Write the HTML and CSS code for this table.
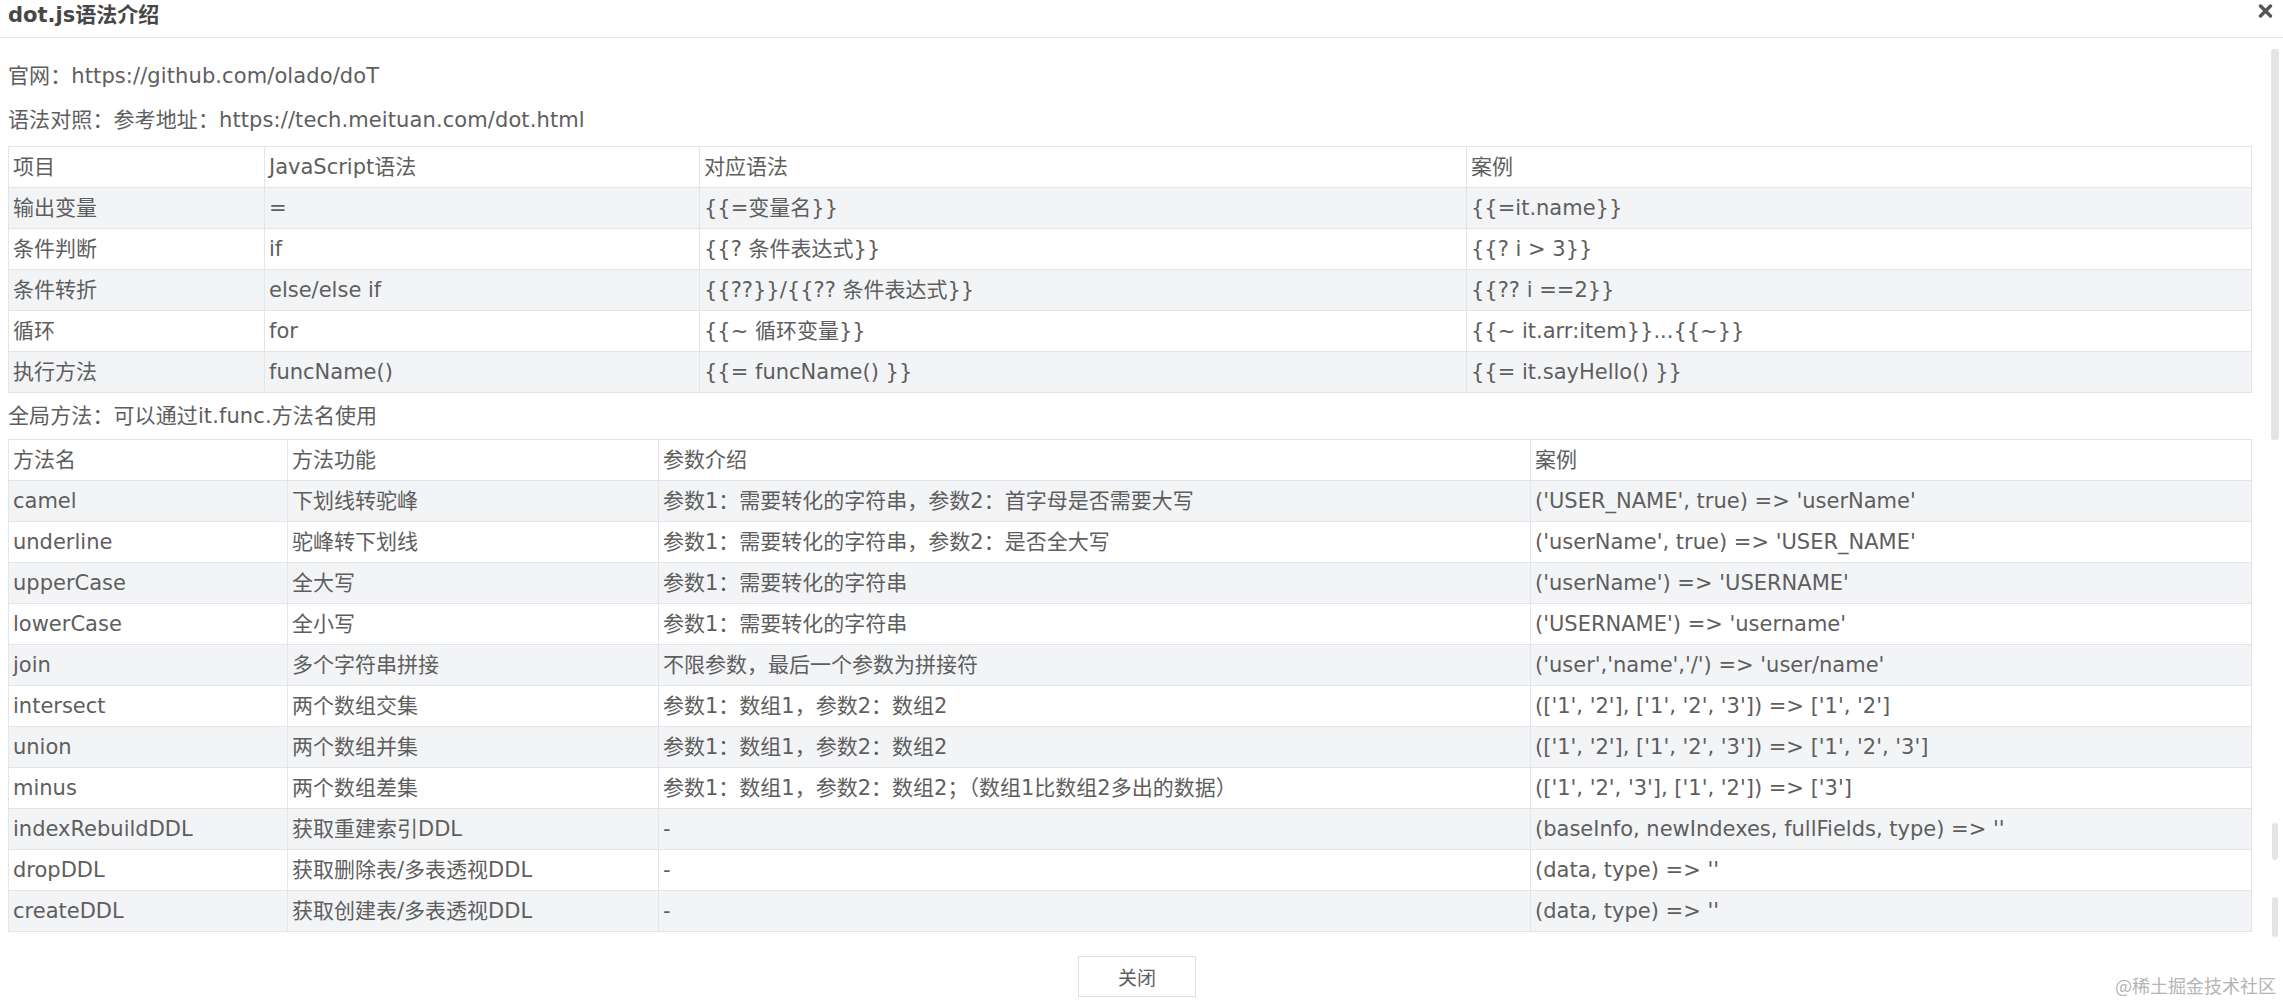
FILE: index.html
```html
<!DOCTYPE html>
<html lang="zh-CN">
<head>
<meta charset="utf-8">
<title>dot.js语法介绍</title>
<link rel="stylesheet" href="styles.css">
</head>
<body>
<div class="dialog">
  <header class="dialog-header">
    <h1 class="dialog-title">dot.js语法介绍</h1>
    <button class="close-btn" type="button" aria-label="关闭">
      <svg width="15" height="14" viewBox="0 0 15 14"><path d="M2.5 2 L12.5 12 M12.5 2 L2.5 12" stroke="#555" stroke-width="3.4" stroke-linecap="round"/></svg>
    </button>
  </header>

  <div class="dialog-body">
    <p class="line line-first">官网：https://github.com/olado/doT</p>
    <p class="line line-second">语法对照：参考地址：https://tech.meituan.com/dot.html</p>

    <table class="grid">
      <colgroup>
        <col class="c1a"><col class="c1b"><col class="c1c"><col class="c1d">
      </colgroup>
      <tbody>
        <tr class="head"><td>项目</td><td>JavaScript语法</td><td>对应语法</td><td>案例</td></tr>
        <tr><td>输出变量</td><td>=</td><td>{{=变量名}}</td><td>{{=it.name}}</td></tr>
        <tr><td>条件判断</td><td>if</td><td>{{? 条件表达式}}</td><td>{{? i &gt; 3}}</td></tr>
        <tr><td>条件转折</td><td>else/else if</td><td>{{??}}/{{?? 条件表达式}}</td><td>{{?? i ==2}}</td></tr>
        <tr><td>循环</td><td>for</td><td>{{~ 循环变量}}</td><td>{{~ it.arr:item}}...{{~}}</td></tr>
        <tr><td>执行方法</td><td>funcName()</td><td>{{= funcName() }}</td><td>{{= it.sayHello() }}</td></tr>
      </tbody>
    </table>

    <p class="line line-global">全局方法：可以通过it.func.方法名使用</p>

    <table class="grid">
      <colgroup>
        <col class="c2a"><col class="c2b"><col class="c2c"><col class="c2d">
      </colgroup>
      <tbody>
        <tr class="head"><td>方法名</td><td>方法功能</td><td>参数介绍</td><td>案例</td></tr>
        <tr><td>camel</td><td>下划线转驼峰</td><td>参数1：需要转化的字符串，参数2：首字母是否需要大写</td><td>('USER_NAME', true) =&gt; 'userName'</td></tr>
        <tr><td>underline</td><td>驼峰转下划线</td><td>参数1：需要转化的字符串，参数2：是否全大写</td><td>('userName', true) =&gt; 'USER_NAME'</td></tr>
        <tr><td>upperCase</td><td>全大写</td><td>参数1：需要转化的字符串</td><td>('userName') =&gt; 'USERNAME'</td></tr>
        <tr><td>lowerCase</td><td>全小写</td><td>参数1：需要转化的字符串</td><td>('USERNAME') =&gt; 'username'</td></tr>
        <tr><td>join</td><td>多个字符串拼接</td><td>不限参数，最后一个参数为拼接符</td><td>('user','name','/') =&gt; 'user/name'</td></tr>
        <tr><td>intersect</td><td>两个数组交集</td><td>参数1：数组1，参数2：数组2</td><td>(['1', '2'], ['1', '2', '3']) =&gt; ['1', '2']</td></tr>
        <tr><td>union</td><td>两个数组并集</td><td>参数1：数组1，参数2：数组2</td><td>(['1', '2'], ['1', '2', '3']) =&gt; ['1', '2', '3']</td></tr>
        <tr><td>minus</td><td>两个数组差集</td><td>参数1：数组1，参数2：数组2；（数组1比数组2多出的数据）</td><td>(['1', '2', '3'], ['1', '2']) =&gt; ['3']</td></tr>
        <tr><td>indexRebuildDDL</td><td>获取重建索引DDL</td><td>-</td><td>(baseInfo, newIndexes, fullFields, type) =&gt; ''</td></tr>
        <tr><td>dropDDL</td><td>获取删除表/多表透视DDL</td><td>-</td><td>(data, type) =&gt; ''</td></tr>
        <tr><td>createDDL</td><td>获取创建表/多表透视DDL</td><td>-</td><td>(data, type) =&gt; ''</td></tr>
      </tbody>
    </table>
  </div>

  <footer class="dialog-footer">
    <button class="btn" type="button">关闭</button>
  </footer>

  <div class="scroll-thumb thumb-main"></div>
  <div class="scroll-thumb thumb-a"></div>
  <div class="scroll-thumb thumb-b"></div>
  <div class="watermark">@稀土掘金技术社区</div>
</div>
</body>
</html>
```

FILE: styles.css
```css
html, body {
  margin: 0;
  padding: 0;
  background: #ffffff;
}

body {
  font-family: "DejaVu Sans", "Noto Sans CJK SC", sans-serif;
  color: #5e5e5e;
  font-size: 21px;
}

.dialog {
  position: relative;
  width: 2283px;
  height: 1001px;
  overflow: hidden;
  display: flex;
  flex-direction: column;
}

.dialog-header {
  height: 37px;
  border-bottom: 1px solid #e6e6e6;
  display: flex;
  justify-content: space-between;
  align-items: flex-start;
  padding: 0 10px 0 8px;
  flex: none;
}

.dialog-title {
  margin: 0;
  font-size: 21px;
  font-weight: bold;
  line-height: 30px;
  color: #474747;
}

.close-btn {
  border: 0;
  background: transparent;
  padding: 0;
  margin-top: 4px;
  width: 15px;
  height: 14px;
  display: flex;
  cursor: pointer;
}

.dialog-body {
  padding: 0 32px 0 8px;
  display: flex;
  flex-direction: column;
  flex: none;
}

.line {
  margin: 0;
  line-height: 32px;
  white-space: nowrap;
  letter-spacing: 0.1px;
}

.line-first {
  margin-top: 22px;
}

.line-second {
  margin-top: 12px;
  margin-bottom: 10px;
}

.line-global {
  margin-top: 7px;
  margin-bottom: 7px;
}

.grid {
  width: 2243px;
  table-layout: fixed;
  border-collapse: collapse;
}

.grid td {
  height: 40px;
  padding: 0 4px;
  border: 1px solid #e2e5ea;
  white-space: nowrap;
  vertical-align: middle;
  line-height: 24px;
}

.grid tr:nth-child(even) td {
  background: #f3f4f6;
}

.grid tr.head td {
  background: #ffffff;
}

.c1a { width: 256px; }
.c1b { width: 435px; }
.c1c { width: 767px; }
.c1d { width: 785px; }

.c2a { width: 279px; }
.c2b { width: 371px; }
.c2c { width: 872px; }
.c2d { width: 721px; }

.dialog-footer {
  display: flex;
  justify-content: center;
  padding: 24px 9px 0 0;
  flex: none;
}

.btn {
  width: 118px;
  height: 41px;
  border: 1px solid #dcdfe6;
  background: #ffffff;
  color: #5e5e5e;
  font-family: "DejaVu Sans", "Noto Sans CJK SC", sans-serif;
  font-size: 19px;
  padding: 0;
}

.scroll-thumb {
  position: absolute;
  background: #e4e4e6;
  border-radius: 3px;
}

.thumb-main {
  left: 2271px;
  top: 49px;
  width: 8px;
  height: 391px;
}

.thumb-a {
  left: 2272px;
  top: 823px;
  width: 6px;
  height: 37px;
}

.thumb-b {
  left: 2272px;
  top: 897px;
  width: 6px;
  height: 40px;
}

.watermark {
  position: absolute;
  right: 7px;
  bottom: 6px;
  font-size: 18px;
  line-height: 20px;
  color: #b4b4b4;
  font-family: "Noto Sans CJK SC", sans-serif;
}
```
